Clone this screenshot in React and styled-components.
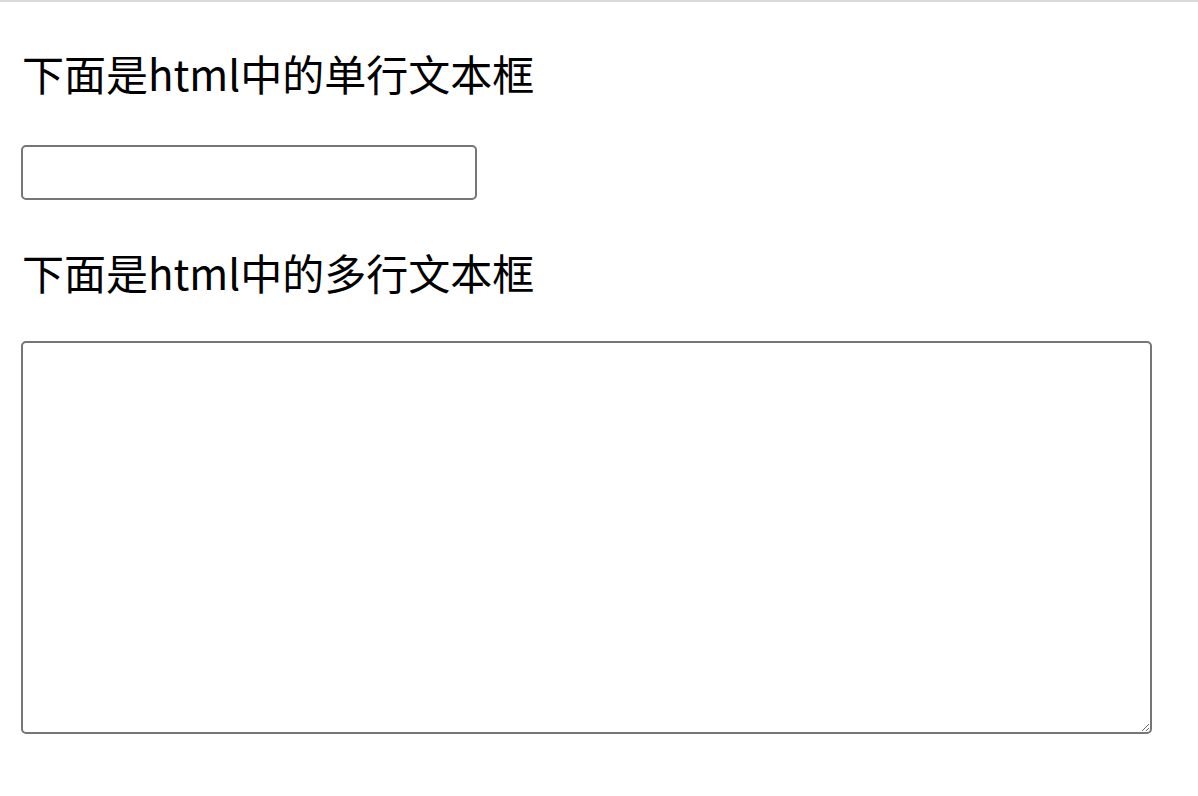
import styled, { createGlobalStyle } from "styled-components";

const GlobalStyle = createGlobalStyle`
    html, body {
        margin: 0;
        padding: 0;
        background: #ffffff;
    }
    body {
        font-family: "Noto Sans CJK SC", "Noto Sans", sans-serif;
        color: #000000;
    }
`;

const Page = styled.div`
    border-top: 2px solid #dadada;
    padding: 0 21px;
    display: flex;
    flex-direction: column;
    align-items: flex-start;
`;

const Label = styled.p`
    margin: ${(props) => props.$top}px 0 0 1px;
    font-size: 42px;
    line-height: 60px;
    height: 60px;
    white-space: nowrap;
`;

const TextInput = styled.input`
    box-sizing: border-box;
    margin-top: 42px;
    width: 456px;
    height: 55px;
    border: 2px solid #767676;
    border-radius: 5px;
    padding: 0 8px;
    font-size: 24px;
    font-family: inherit;
    background: #fff;
`;

const TextArea = styled.textarea`
    box-sizing: border-box;
    margin-top: 39px;
    width: 1131px;
    height: 393px;
    border: 2px solid #767676;
    border-radius: 5px;
    padding: 6px 8px;
    font-size: 24px;
    font-family: inherit;
    background: #fff;
`;

const App = () => {
    return (
        <>
            <GlobalStyle />
            <Page>
                <Label $top={41}>下面是html中的单行文本框</Label>
                <TextInput type="text" />
                <Label $top={42}>下面是html中的多行文本框</Label>
                <TextArea />
            </Page>
        </>
    );
};

export default App;
